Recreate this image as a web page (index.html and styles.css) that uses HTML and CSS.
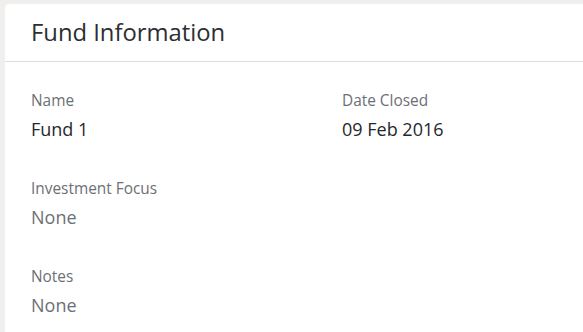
FILE: index.html
```html
<!DOCTYPE html>
<html>
<head>
<meta charset="utf-8">
<link rel="stylesheet" href="styles.css">
</head>
<body>
<div class="card">
  <div class="card-header">Fund Information</div>
  <div class="card-body">
    <div class="field">
      <div class="label">Name</div>
      <div class="value">Fund 1</div>
    </div>
    <div class="field">
      <div class="label">Date Closed</div>
      <div class="value">09 Feb 2016</div>
    </div>
    <div class="field">
      <div class="label">Investment Focus</div>
      <div class="value empty">None</div>
    </div>
    <div class="field"></div>
    <div class="field">
      <div class="label">Notes</div>
      <div class="value empty">None</div>
    </div>
  </div>
</div>
</body>
</html>
```
FILE: styles.css
```css
html, body {
  margin: 0;
  padding: 0;
  background: #f0efed;
  font-family: "Open Sans", "Liberation Sans", sans-serif;
  overflow: hidden;
  height: 332px;
}
body {
  padding: 4px 0 0 5px;
  box-sizing: border-box;
}
.card {
  width: 700px;
  height: 400px;
  background: #ffffff;
  border-radius: 4px;
}
.card-header {
  height: 58px;
  box-sizing: border-box;
  padding: 13px 0 0 26px;
  font-size: 23.8px;
  line-height: 30px;
  color: #2b2f33;
  border-bottom: 1px solid #dcdcdc;
}
.card-body {
  display: grid;
  grid-template-columns: 311px 1fr;
  row-gap: 36.5px;
  padding: 27.5px 0 0 26px;
}
.label {
  font-size: 15.4px;
  line-height: 21px;
  color: #6c7075;
}
.value {
  margin-top: 6.5px;
  font-size: 18px;
  line-height: 24px;
  color: #26282b;
}
.value.empty {
  color: #6c7075;
}
```
